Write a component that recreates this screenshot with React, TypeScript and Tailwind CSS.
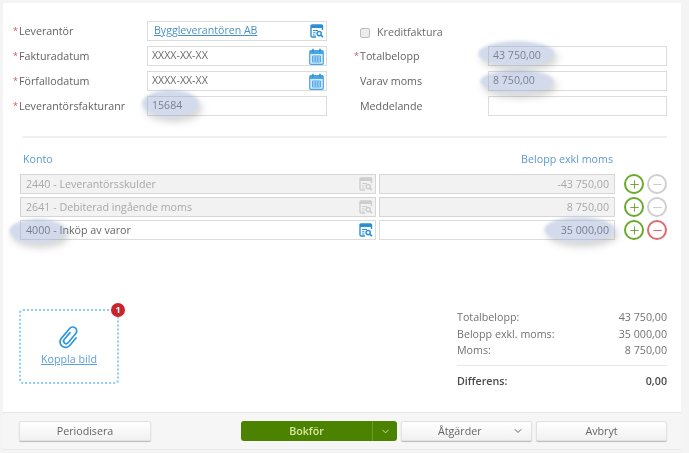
import React from 'react';
import { ChevronDown, Minus, Plus } from 'lucide-react';

const LookupIcon = ({ muted }: { muted?: boolean }) => {
  const c = muted ? '#cdcdcd' : '#2b8fd6';
  return (
    <svg width="14" height="14" viewBox="0 0 14 14" fill="none">
      <path d="M12.5 6V2.2c0-.7-.5-1.2-1.2-1.2H2.2C1.5 1 1 1.5 1 2.2v9.6c0 .7.5 1.2 1.2 1.2H6" stroke={c} strokeWidth="1.4" />
      <rect x="1" y="1" width="11.5" height="3" fill={c} />
      <path d="M3 6.5h5M3 8.8h2.5M3 11h2.5" stroke={c} strokeWidth="1" />
      <circle cx="9.2" cy="9.6" r="2.1" stroke={c} strokeWidth="1.4" />
      <path d="M10.8 11.2 13 13.2" stroke={c} strokeWidth="1.6" />
    </svg>
  );
};

const CalendarIcon = () => (
  <svg width="15" height="17" viewBox="0 0 15 17" fill="none">
    <rect x="0.7" y="2.7" width="13.6" height="13.6" rx="1" fill="#d5ebf9" stroke="#4aa5e3" strokeWidth="1.2" />
    <rect x="1" y="3" width="13" height="3" fill="#4aa5e3" />
    <path d="M4 0.8v3.4M11 0.8v3.4" stroke="#2b8fd6" strokeWidth="1.5" />
    <path d="M3.5 8h8v6h-8zM3.5 10h8M3.5 12h8M6.2 8v6M8.8 8v6" stroke="#4aa5e3" strokeWidth="0.9" />
  </svg>
);

// soft highlight painted over a value
const Blob = ({ className }: { className: string }) => (
  <div className={`pointer-events-none absolute rounded-[50%] bg-[#8fa3cc]/40 shadow-[3px_5px_6px_rgba(90,90,90,0.25)] blur-[1.5px] ${className}`} />
);

const Label = ({ text, required }: { text: string; required?: boolean }) => (
  <div className="flex w-[134px] items-center text-[10.7px] text-[#636363]">
    <span className={`w-[6px] text-[9px] text-[#d9535a] ${required ? '' : 'invisible'}`}>*</span>
    {text}
  </div>
);

const Field = ({ value, width, icon, link }: { value?: string; width: string; icon?: React.ReactNode; link?: boolean }) => (
  <div className={`flex h-[20px] items-center justify-between border border-[#dcdcdc] bg-white pl-[4px] pr-[2px] text-[10.6px] text-[#6b6b6b] ${width}`}>
    {link ? <span className="ml-[2px] text-[#4a90c8] underline">{value}</span> : <span>{value}</span>}
    {icon}
  </div>
);

const ActionIcons = ({ canRemove }: { canRemove?: boolean }) => (
  <div className="ml-[9px] flex gap-[3px]">
    <div className="flex h-[20px] w-[20px] items-center justify-center rounded-full border-2 border-[#6aa92a] text-[#5d9e1f]">
      <Plus size={13} strokeWidth={1.6} />
    </div>
    <div className={`flex h-[20px] w-[20px] items-center justify-center rounded-full border-2 ${canRemove ? 'border-[#dc6a6f] text-[#d9484f]' : 'border-[#cfcfcf] text-[#c4c4c4]'}`}>
      <Minus size={13} strokeWidth={1.6} />
    </div>
  </div>
);

const AccountRow = ({ account, amount, locked }: { account: string; amount: string; locked?: boolean }) => {
  const box = locked ? 'border-[#d6d6d6] bg-[#f2f2f2] text-[#a8a8a8]' : 'border-[#dcdcdc] bg-white text-[#666]';
  return (
    <div className="flex h-[20px] items-center">
      <div className={`flex h-full w-[356px] items-center justify-between border pl-[5px] pr-[2px] text-[10.7px] ${box}`}>
        <span>{account}</span>
        <LookupIcon muted={locked} />
      </div>
      <div className={`ml-[3px] flex h-full w-[236px] items-center justify-end border pr-[5px] text-[10.7px] ${box}`}>{amount}</div>
      <ActionIcons canRemove={!locked} />
    </div>
  );
};

const SummaryRow = ({ label, value }: { label: string; value: string }) => (
  <div className="flex h-[16.5px] items-center justify-between text-[10.7px] text-[#727272]">
    <span>{label}</span>
    <span>{value}</span>
  </div>
);

const btn = 'flex h-[20px] items-center rounded-[2px] border border-[#e2e2e2] bg-gradient-to-b from-white to-[#f1f1f1] text-[10.7px] text-[#666] shadow-[0_1px_1px_rgba(0,0,0,0.25)]';

export default function App() {
  return (
    <div className="flex h-[453px] w-[689px] flex-col overflow-hidden bg-[#f4f4f4] pl-[3px] pr-[8px] pt-[3px] font-['Open_Sans',sans-serif] blur-[0.45px]">
      <div className="relative h-[409px] bg-white pl-[10px] pr-[14px] pt-[18px]">
        <div className="flex">
          <div className="flex w-[341px] flex-col gap-[5px]">
            <div className="flex h-[20px]">
              <Label text="Leverantör" required />
              <Field value="Byggleverantören AB" width="w-[180px]" link icon={<LookupIcon />} />
            </div>
            <div className="flex h-[20px]">
              <Label text="Fakturadatum" required />
              <Field value="XXXX-XX-XX" width="w-[180px]" icon={<CalendarIcon />} />
            </div>
            <div className="flex h-[20px]">
              <Label text="Förfallodatum" required />
              <Field value="XXXX-XX-XX" width="w-[180px]" icon={<CalendarIcon />} />
            </div>
            <div className="flex h-[20px]">
              <Label text="Leverantörsfakturanr" required />
              <Field value="15684" width="w-[180px]" />
            </div>
          </div>
          <div className="flex flex-col gap-[5px]">
            <div className="flex h-[20px] items-center pl-[6px] pt-[3px] text-[10.7px] text-[#6b6b6b]">
              <div className="mr-[7px] h-[10px] w-[10px] rounded-[2px] border border-[#bdbdbd] bg-[#ececec]" />
              Kreditfaktura
            </div>
            <div className="flex h-[20px]">
              <Label text="Totalbelopp" required />
              <Field value="43 750,00" width="w-[179px]" />
            </div>
            <div className="flex h-[20px]">
              <Label text="Varav moms" />
              <Field value="8 750,00" width="w-[179px]" />
            </div>
            <div className="flex h-[20px]">
              <Label text="Meddelande" />
              <Field width="w-[179px]" />
            </div>
          </div>
        </div>

        <div className="ml-[9px] mt-[20px] h-[2px] bg-[#f0f0f0]" />

        <div className="ml-[10px] mr-[54px] mt-[13px] flex h-[16px] items-center justify-between text-[10.7px] text-[#5a9bd0]">
          <span>Konto</span>
          <span>Belopp exkl moms</span>
        </div>

        <div className="ml-[7px] mt-[7px] flex flex-col gap-[3px]">
          <AccountRow account="2440 - Leverantörsskulder" amount="-43 750,00" locked />
          <AccountRow account="2641 - Debiterad ingående moms" amount="8 750,00" locked />
          <AccountRow account="4000 - Inköp av varor" amount="35 000,00" />
        </div>

        <div className="ml-[6px] mt-[69px] flex items-start justify-between">
          <div className="relative flex h-[75px] w-[100px] flex-col items-center justify-center rounded-[4px] border-2 border-dotted border-[#8ccdf3]">
            <svg width="24" height="24" viewBox="0 0 24 24" fill="none" className="mb-[2px]">
              <g transform="rotate(40 12 12)">
                <path d="M10 8v9a2.5 2.5 0 0 0 5 0V5a4 4 0 0 0-8 0v13a5.5 5.5 0 0 0 11 0V8" stroke="#2b97e0" strokeWidth="1.7" strokeLinecap="round" />
              </g>
            </svg>
            <span className="text-[10.7px] text-[#5d9fd9] underline">Koppla bild</span>
            <div className="absolute right-[-8px] top-[-8px] flex h-[14px] w-[14px] items-center justify-center rounded-full bg-[#c9252c] text-[9px] font-bold text-white">1</div>
          </div>
          <div className="w-[210px]">
            <SummaryRow label="Totalbelopp:" value="43 750,00" />
            <SummaryRow label="Belopp exkl. moms:" value="35 000,00" />
            <SummaryRow label="Moms:" value="8 750,00" />
            <div className="mt-[6px] h-[1px] bg-[#e6e6e6]" />
            <div className="mt-[7px] flex items-center justify-between text-[10.7px] font-semibold text-[#4a4a4a]">
              <span>Differens:</span>
              <span>0,00</span>
            </div>
          </div>
        </div>

        <Blob className="left-[139px] top-[87px] h-[27px] w-[57px]" />
        <Blob className="left-[475px] top-[38px] h-[25px] w-[77px]" />
        <Blob className="left-[477px] top-[67px] h-[23px] w-[74px]" />
        <Blob className="left-[6px] top-[216px] h-[24px] w-[57px]" />
        <Blob className="left-[541px] top-[214px] h-[25px] w-[71px]" />
      </div>

      <div className="flex h-[38px] items-center border-y border-[#e8e8e8] bg-[#f6f6f6] pl-[16px] pr-[14px]">
        <button className={`${btn} w-[132px] justify-center`}>Periodisera</button>
        <div className="ml-[90px] flex h-[20px] w-[156px] overflow-hidden rounded-[3px] bg-[#4b8200] text-[10.7px] font-semibold text-[#dbe8a8]">
          <div className="flex w-[131px] items-center justify-center">Bokför</div>
          <div className="flex flex-1 items-center justify-center border-l border-[#6c9a30]">
            <ChevronDown size={11} />
          </div>
        </div>
        <button className={`${btn} ml-[4px] w-[131px] justify-between pl-[36px] pr-[7px]`}>
          Åtgärder
          <ChevronDown size={12} />
        </button>
        <button className={`${btn} ml-[4px] w-[131px] justify-center`}>Avbryt</button>
      </div>
    </div>
  );
}
